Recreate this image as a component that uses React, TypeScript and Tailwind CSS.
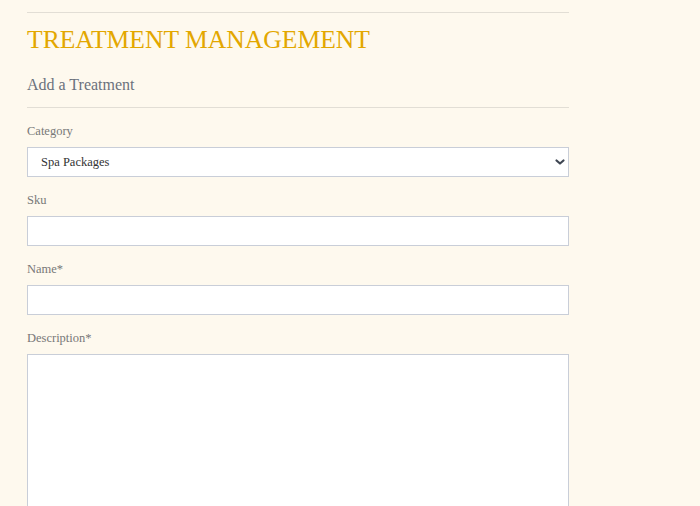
import React from "react";

const serif = { fontFamily: '"Liberation Serif", "Times New Roman", serif' };

function Label({ children }: { children: React.ReactNode }) {
  return (
    <div className="mt-[14px] h-[18px] text-[12.5px] leading-[18px] text-[#787878]">{children}</div>
  );
}

function Input() {
  return (
    <div className="mt-[7px] h-[30px] w-full border border-[#c9ced8] bg-white" />
  );
}

export default function App() {
  return (
    <div className="min-h-[506px] w-full bg-[#fef9ee]" style={serif}>
      <div className="ml-[27px] w-[542px] pt-[12px]">
        <div className="border-t border-[#e2ded5]" />
        <h1 className="mt-[12px] h-[30px] text-[25.6px] leading-[30px] font-normal text-[#e3a700]">
          TREATMENT MANAGEMENT
        </h1>
        <div className="mt-[18px] h-[24px] text-[16px] leading-[24px] text-[#6b717c]">Add a Treatment</div>
        <div className="mt-[10px] border-t border-[#e2ded5]" />

        <Label>Category</Label>
        <div className="mt-[7px] flex h-[30px] w-full items-center justify-between border border-[#c9ced8] bg-white pl-[13px] pr-[2px]">
          <span className="text-[12.5px] text-[#333]">Spa Packages</span>
          <svg width="12" height="8" viewBox="0 0 12 8">
            <path d="M2.5 2.5 L6 5.5 L9.5 2.5" fill="none" stroke="#3f4652" strokeWidth="2.2" strokeLinecap="round" strokeLinejoin="round" />
          </svg>
        </div>

        <Label>Sku</Label>
        <Input />

        <Label>Name*</Label>
        <Input />

        <Label>Description*</Label>
        <div className="mt-[7px] h-[200px] w-full border border-[#c9ced8] bg-white" />
      </div>
    </div>
  );
}
